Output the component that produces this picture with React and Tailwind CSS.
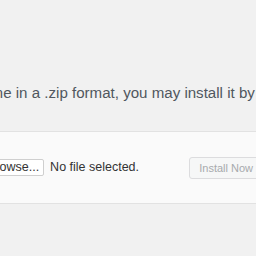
export default function App() {
  return (
    <div className="h-[256px] w-[256px] overflow-hidden bg-[#f1f1f1] font-['Liberation_Sans',Arial,sans-serif]">
      <p className="-ml-[121px] whitespace-nowrap pt-[84px] text-[15.1px] leading-[18px] text-[#50575e]">
        If you have a theme in a .zip format, you may install it by uploading it here.
      </p>
      <div className="mt-[29px] flex h-[73px] items-center justify-between border-y border-[#e2e2e2] bg-[#fafafa]">
        <div className="-ml-[18px] flex items-center gap-[6px]">
          <button
            type="button"
            className="h-[17px] rounded-[2px] border border-[#cfcfcf] bg-white px-[4px] text-[12.5px] leading-[15px] text-[#333]"
          >
            Browse...
          </button>
          <span className="text-[12.5px] text-[#333]">No file selected.</span>
        </div>
        <button
          type="button"
          disabled
          className="-mr-[8px] h-[22px] rounded-[3px] border border-[#dcdcde] bg-[#f6f7f7] pl-[9px] pr-[10px] text-[11px] leading-[20px] text-[#a7aaad]"
        >
          Install Now
        </button>
      </div>
    </div>
  )
}
